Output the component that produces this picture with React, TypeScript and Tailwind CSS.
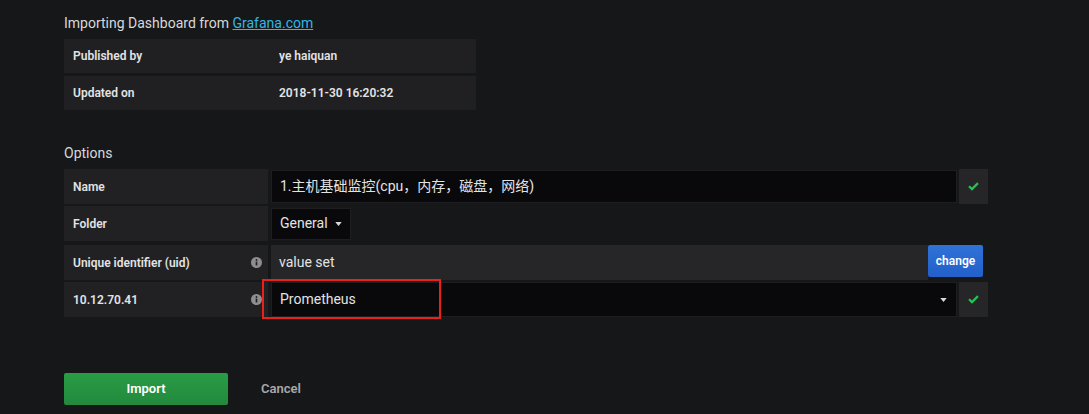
import React from "react";

const infoRows = [
  { label: "Published by", value: "ye haiquan" },
  { label: "Updated on", value: "2018-11-30 16:20:32" },
];

function Check() {
  return (
    <svg width="11" height="9" viewBox="0 0 12 10" fill="#23c552">
      <path d="M4.3 9.6 0.2 5.5 1.9 3.8 4.3 6.2 10.1 0.4 11.8 2.1z" />
    </svg>
  );
}

function Caret() {
  return (
    <svg width="7" height="4" viewBox="0 0 8 5" fill="#d8d9da">
      <path d="M0 0h8L4 5z" />
    </svg>
  );
}

function Info() {
  return (
    <svg width="11" height="11" viewBox="0 0 12 12">
      <circle cx="6" cy="6" r="6" fill="#8e8e8e" />
      <rect x="5.1" y="5" width="1.8" height="4.2" fill="#212124" />
      <circle cx="6" cy="3.3" r="1" fill="#212124" />
    </svg>
  );
}

function Label({ text, info }: { text: string; info?: boolean }) {
  return (
    <div className="w-[204px] h-[35px] bg-[#212124] flex items-center justify-between pl-[9px] pr-[6px] text-[12px] font-semibold text-[#e3e3e3]">
      <span>{text}</span>
      {info && <Info />}
    </div>
  );
}

export default function App() {
  return (
    <div
      className="w-[1089px] h-[414px] bg-[#161719] text-[#d8d9da] pl-[64px] pt-[13px]"
      style={{ fontFamily: "Roboto, 'Noto Sans CJK SC', sans-serif" }}
    >
      <div className="text-[14px] leading-[20px]">
        Importing Dashboard from{" "}
        <span className="text-[#33b5e5] underline">Grafana.com</span>
      </div>

      <div className="mt-[6px] w-[412px] flex flex-col gap-[3px]">
        {infoRows.map((r) => (
          <div key={r.label} className="h-[34px] bg-[#202023] flex items-center text-[12px] font-semibold text-[#e3e3e3]">
            <div className="w-[215px] pl-[9px]">{r.label}</div>
            <div>{r.value}</div>
          </div>
        ))}
      </div>

      <div className="mt-[33px] text-[14px] leading-[20px]">Options</div>

      <div className="mt-[6px] flex flex-col">
        <div className="flex items-center gap-[3px]">
          <Label text="Name" />
          <div className="w-[686px] h-[33px] bg-[#09090b] border border-[#1e1e20] flex items-center pl-[8px] text-[14px] text-[#e3e3e3]">
            1.主机基础监控(cpu，内存，磁盘，网络)
          </div>
          <div className="w-[29px] h-[35px] -ml-[1px] bg-[#262628] flex items-center justify-center">
            <Check />
          </div>
        </div>

        <div className="mt-[2px] flex items-center gap-[3px]">
          <Label text="Folder" />
          <div className="w-[80px] h-[32px] bg-[#09090b] border border-[#1e1e20] flex items-center pl-[8px] gap-[7px] text-[14px] text-[#e3e3e3]">
            General
            <Caret />
          </div>
        </div>

        <div className="mt-[4px] flex items-start gap-[3px]">
          <Label text="Unique identifier (uid)" info />
          <div className="w-[657px] h-[35px] bg-[#262628] flex items-center pl-[8px] text-[14px] text-[#e3e3e3]">
            value set
          </div>
          <div className="-ml-[3px] w-[55px] h-[32px] rounded-[2px] bg-gradient-to-b from-[#2f72d8] to-[#2360c9] flex items-center justify-center text-[12px] font-semibold text-white">
            change
          </div>
        </div>

        <div className="mt-[2px] flex items-center gap-[3px]">
          <Label text="10.12.70.41" info />
          <div className="relative w-[686px] h-[35px] bg-[#09090b] border border-[#1e1e20] flex items-center justify-between pl-[8px] pr-[9px] text-[14px] text-[#e3e3e3]">
            Prometheus
            <Caret />
            <div className="absolute left-[-10px] top-[-4px] w-[179px] h-[40px] border-2 border-[#e8211d]" />
          </div>
          <div className="w-[29px] h-[35px] -ml-[1px] bg-[#262628] flex items-center justify-center">
            <Check />
          </div>
        </div>
      </div>

      <div className="mt-[56px] flex items-center">
        <div className="w-[164px] h-[32px] rounded-[2px] bg-gradient-to-b from-[#299c46] to-[#23893d] flex items-center justify-center text-[13px] font-semibold text-white">
          Import
        </div>
        <div className="ml-[33px] text-[13px] font-semibold text-[#a8a8aa]">Cancel</div>
      </div>
    </div>
  );
}
